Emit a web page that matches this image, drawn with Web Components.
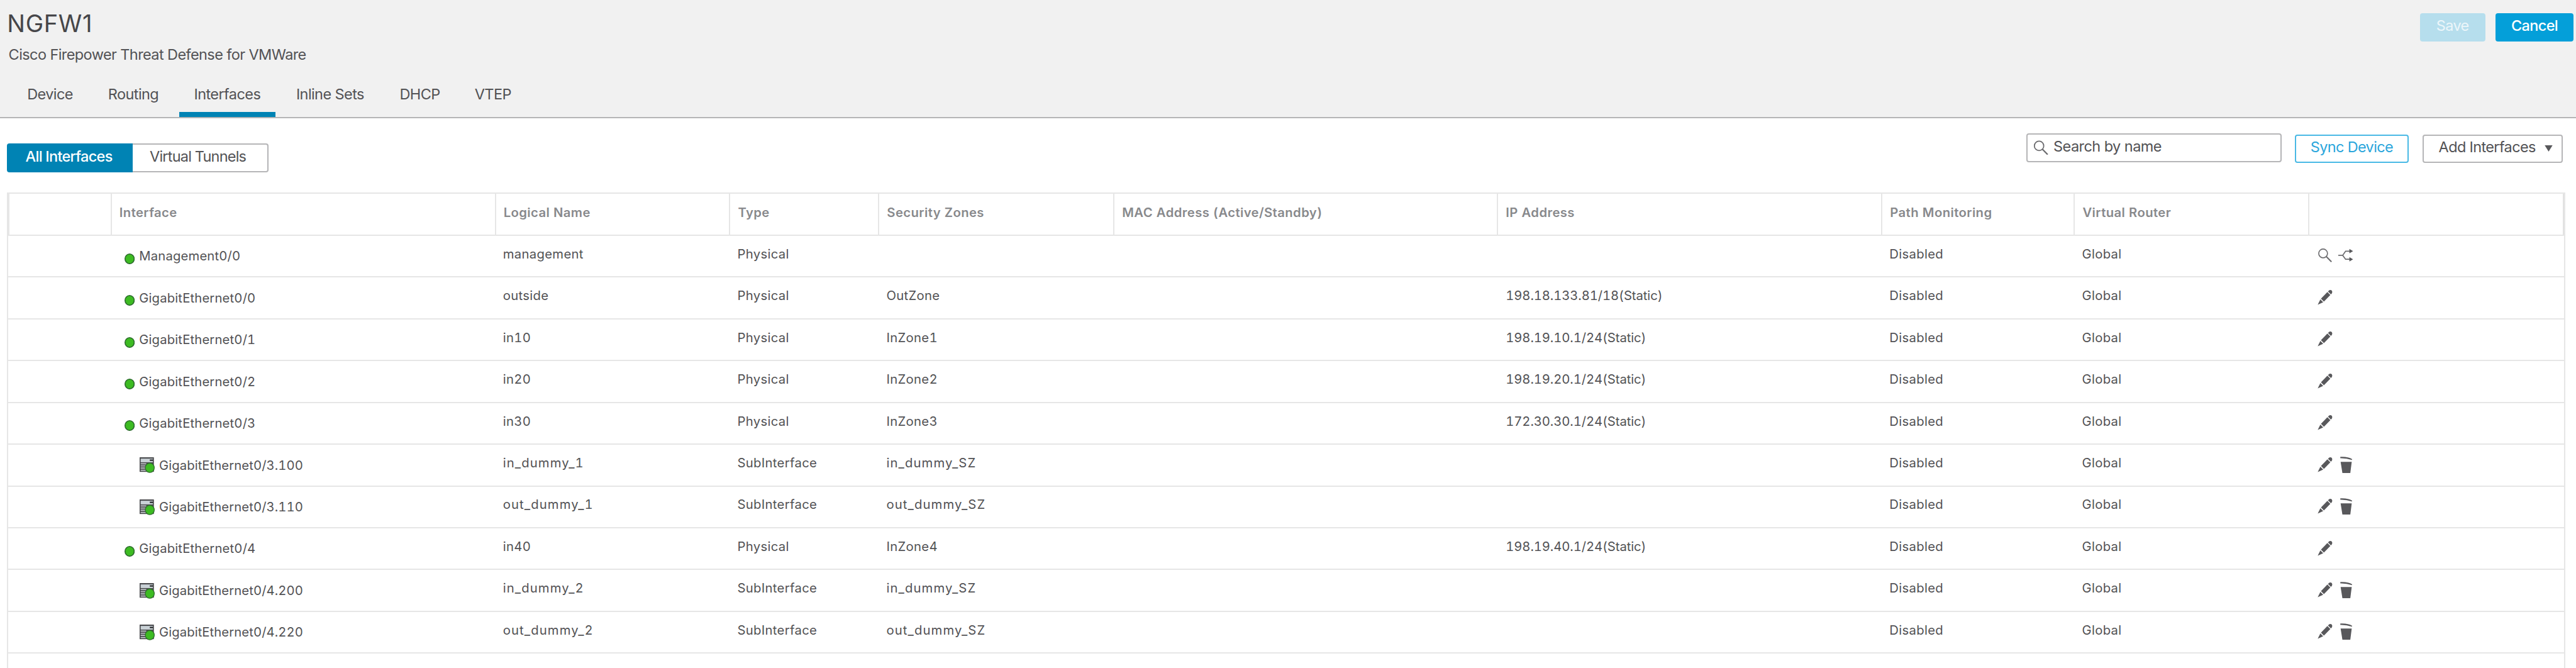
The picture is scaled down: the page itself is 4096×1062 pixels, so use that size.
<!DOCTYPE html>
<html lang="en">
<head>
<meta charset="utf-8">
<title>NGFW1 - Interfaces</title>
<style>
  html { font-size: 8.1045px; }
  body { margin: 0; height: 1062px; overflow: hidden; background: #fff; color: #525255; font-family: Inter, "Liberation Sans", sans-serif; }
</style>
</head>
<body>
<device-page></device-page>
<script>
const define = (name, html, setup) => customElements.define(name, class extends HTMLElement {
  constructor() {
    super();
    const t = document.createElement('template');
    t.innerHTML = '<style>*{box-sizing:border-box}:host{box-sizing:border-box}</style>' + html;
    this.attachShadow({ mode: 'open' }).append(t.content.cloneNode(true));
  }
  connectedCallback() { if (setup) setup(this, this.shadowRoot); }
});

const ICONS = {
  search: '<circle cx="12.2" cy="12.2" r="8.6" fill="none" stroke="#6b6b6e" stroke-width="2"/><path d="M18.3 18.3L28.6 28.6" stroke="#6b6b6e" stroke-width="2.6"/>',
  branch: '<path d="M0 16H8.7L14.4 7.8H23M8.7 16L14.4 23.7H23" fill="none" stroke="#6b6b6e" stroke-width="2.2"/><path d="M21.8 3.5L29 7.8L21.8 12ZM21.8 19.5L29 23.7L21.8 28Z" fill="#58585b"/>',
  edit: '<path d="M20.6 5.4L26.4 11.2L13.8 24L8 18.2ZM6.8 19.6L12.4 25.2L1.6 30.2ZM21.8 4.2L24 2Q27 .2 29.3 2.6Q31 5 29.6 7.8L27.5 10Z" fill="#58585b"/>',
  trash: '<path d="M4 .3Q19-.6 27.3 4.8L26.7 6.6Q16 2.9 4 3.2ZM4.6 10.2H26.4L23.6 32H8.1Z" fill="#58585b"/>',
};

define('ui-icon', `<style>:host{display:block;width:3.2rem;height:3.2rem;flex:none}svg{display:block;width:100%;height:100%;overflow:visible}</style><svg viewBox="0 0 32 32"></svg>`,
  (el, root) => { root.querySelector('svg').innerHTML = ICONS[el.getAttribute('name')]; });

define('status-dot', `<style>:host{display:block;width:2rem;height:2.1rem;flex:none}svg{display:block;width:100%;height:100%}</style>
<svg viewBox="0 0 20 21"><ellipse cx="10" cy="10.5" rx="9" ry="9.5" fill="#3dbb22" stroke="#2b6a2c" stroke-width="2"/></svg>`);

define('sub-icon', `<style>:host{display:block;width:3rem;height:3.1rem;flex:none}svg{display:block;width:100%;height:100%}</style>
<svg viewBox="0 0 30 31">
<rect width="28" height="28.6" fill="#4a4b4e"/>
<rect x="2" y="2.6" width="24" height="7.2" fill="#c9d1d6"/>
<rect x="20" y="4.4" width="6.4" height="2.6" fill="#1f2022"/>
<path d="M2 12.8H13M2 17H13M2 21.2H13M2 25.4H16" stroke="#c3c8cc" stroke-width="2"/>
<ellipse cx="20" cy="20.6" rx="8.8" ry="9.2" fill="#3dbb22" stroke="#2f6e2c" stroke-width="1.6"/></svg>`);

define('ui-button', `<style>
:host{display:flex;align-items:center;justify-content:center;height:5.63rem;padding-bottom:.53rem;border-radius:.5rem;font-size:2.9rem;line-height:4rem;letter-spacing:-.08rem;white-space:nowrap}
:host([kind=primary]){background:#049fd9;color:#fff;font-weight:500}
:host([kind=disabled]){background:#b6deed;color:#ecf6fa;font-weight:400}
:host([kind=link]),:host([kind=plain]){border:2px solid #49b9e5;padding-bottom:.5rem;background:#fff;color:#2ba6dc}
:host([kind=plain]){border-color:#b5b5b7;color:#525255}
</style><slot></slot>`);

define('nav-tab', `<style>
:host{display:block;height:10.28rem;padding-top:3.83rem;text-align:center;font-size:2.9rem;line-height:4rem;letter-spacing:-.072rem;white-space:nowrap}
:host([active]){border-bottom:1rem solid #0083b4}
</style><slot></slot>`);

define('device-header', `<style>
:host{display:flex;justify-content:space-between;height:23.15rem;background:#f1f1f1;border-bottom:2px solid #b5b5b6}
h1{margin:1.66rem 0 0 1.4rem;font-weight:400;font-size:4.7rem;line-height:6rem;letter-spacing:.08rem;color:#464649}
p{margin:1.06rem 0 0 1.68rem;font-size:2.9rem;line-height:4rem;letter-spacing:-.073rem}
nav{display:flex;padding-left:2.25rem}
.actions{display:flex;gap:1.98rem;padding:2.57rem .45rem 0 0}
</style>
<div><h1>NGFW1</h1><p>Cisco Firepower Threat Defense for VMWare</p>
<nav>
<nav-tab style="width:15.13rem">Device</nav-tab>
<nav-tab style="width:17.55rem">Routing</nav-tab>
<nav-tab style="width:18.87rem;margin-left:.22rem" active>Interfaces</nav-tab>
<nav-tab style="width:21.5rem">Inline Sets</nav-tab>
<nav-tab style="width:13.7rem">DHCP</nav-tab>
<nav-tab style="width:15rem">VTEP</nav-tab>
</nav></div>
<div class="actions"><ui-button kind="disabled" style="width:12.81rem">Save</ui-button><ui-button kind="primary" style="width:15.38rem">Cancel</ui-button></div>`);

define('search-box', `<style>
:host{display:flex;align-items:center;width:50.05rem;height:5.63rem;border:2px solid #b5b5b7;border-radius:.5rem;padding:0 0 .5rem 1.1rem;font-size:2.9rem;line-height:4rem;letter-spacing:-.068rem}
svg{width:3rem;height:2.9rem;margin:.4rem .93rem 0 0}
</style><svg viewBox="0 0 30 29"><circle cx="11.4" cy="11" r="9.2" fill="none" stroke="#6b6b6e" stroke-width="2.2"/><path d="M18 17.6L28.3 28" stroke="#6b6b6e" stroke-width="2.8"/></svg><span><slot></slot></span>`);

define('segmented-control', `<style>
:host{display:flex;height:5.63rem;font-size:2.9rem;line-height:4rem;white-space:nowrap}
div{display:flex;align-items:center;padding-bottom:.53rem}
.on{width:24.6rem;padding-left:3.6rem;background:#0083b4;color:#fff;font-weight:500;letter-spacing:-.09rem;border-radius:.5rem 0 0 .5rem}
.off{width:26.7rem;padding-left:3.37rem;border:2px solid #b5b5b7;border-left:0;border-radius:0 .5rem .5rem 0;letter-spacing:-.098rem;padding-bottom:.5rem}
</style><div class="on">All Interfaces</div><div class="off">Virtual Tunnels</div>`);

define('table-toolbar', `<style>
:host{display:flex;justify-content:space-between;height:14.65rem;padding:0 2.55rem 0 1.4rem}
segmented-control{padding:0;margin-top:5rem}
.right{display:flex}
search-box{margin-top:3.03rem}
ui-button{margin-top:3.22rem}
.sync{width:22.4rem;margin-left:2.56rem}
.add{width:27.5rem;margin-left:2.76rem;justify-content:flex-start;padding-left:2.85rem}
svg{width:1.6rem;height:1.25rem;margin:.45rem 0 0 1.75rem}
</style>
<segmented-control></segmented-control>
<div class="right"><search-box>Search by name</search-box>
<ui-button class="sync" kind="link">Sync Device</ui-button>
<ui-button class="add" kind="plain"><span>Add Interfaces</span><svg viewBox="0 0 16 12.5"><path d="M.3 0H15.7L8 12.3Z" fill="#58585b"/></svg></ui-button></div>`);

define('interface-row', `<style>
:host{display:grid;grid-template-columns:20.03rem 75.37rem 45.99rem 29.24rem 46.14rem 75.26rem 75.4rem 37.78rem 46.02rem 1fr;height:8.2rem;border-top:2px solid #e6e6e6;font-size:2.5rem;line-height:4rem;letter-spacing:.04rem;font-variant-numeric:tabular-nums;white-space:nowrap}
.c{padding:1.6rem 0 0 1.63rem}
.c.wide{letter-spacing:.14rem}
.c.ip{padding-left:1.75rem;letter-spacing:-.01rem}
.name{display:flex;padding:2.04rem 0 0 2.7rem;gap:.93rem;letter-spacing:.02rem}
.name.sub{padding-left:5.68rem;gap:.87rem;letter-spacing:.01rem}
status-dot{margin-top:1.4rem}
sub-icon{margin-top:.45rem}
.act{display:flex;gap:1rem;padding:2.3rem 0 0 1.75rem}
:host([head]) .c{padding:1.63rem 0 0 1.5rem;border-left:2px solid #e6e6e6;font-weight:600;color:#88898c;letter-spacing:.05rem}
:host([head]) .c:first-child{border-left:0}
:host([head]) .c:last-child{border-right:2px solid #e2e2e2}
</style>`, (el, root) => {
  const d = el.data || {};
  const add = (cls, html) => {
    const c = document.createElement('div');
    c.className = cls; c.innerHTML = html; root.append(c);
  };
  if (el.hasAttribute('head')) {
    ['', 'Interface', 'Logical Name', 'Type', 'Security Zones', 'MAC Address (Active/Standby)', 'IP Address', 'Path Monitoring', 'Virtual Router', ''].forEach(h => add('c', h));
    return;
  }
  if (!d.name) return;
  add('c', '');
  add('name' + (d.sub ? ' sub' : ''), (d.sub ? '<sub-icon></sub-icon>' : '<status-dot></status-dot>') + `<span>${d.name}</span>`);
  const wide = d.sub ? 'c wide' : 'c';
  add(wide, d.logical);
  add('c', d.type);
  add(wide, d.zone);
  add('c', '');
  add('c ip', d.ip);
  add('c', 'Disabled');
  add('c', 'Global');
  add('act', d.icons.map(i => `<ui-icon name="${i}"></ui-icon>`).join(''));
});

const phys = (name, logical, zone, ip, icons = ['edit']) => ({ name, logical, type: 'Physical', zone, ip, icons });
const sub = (name, logical, zone) => ({ name, logical, type: 'SubInterface', zone, ip: '', icons: ['edit', 'trash'], sub: true });
const ROWS = [
  phys('Management0/0', 'management', '', '', ['search', 'branch']),
  phys('GigabitEthernet0/0', 'outside', 'OutZone', '198.18.133.81/18(Static)'),
  phys('GigabitEthernet0/1', 'in10', 'InZone1', '198.19.10.1/24(Static)'),
  phys('GigabitEthernet0/2', 'in20', 'InZone2', '198.19.20.1/24(Static)'),
  phys('GigabitEthernet0/3', 'in30', 'InZone3', '172.30.30.1/24(Static)'),
  sub('GigabitEthernet0/3.100', 'in_dummy_1', 'in_dummy_SZ'),
  sub('GigabitEthernet0/3.110', 'out_dummy_1', 'out_dummy_SZ'),
  phys('GigabitEthernet0/4', 'in40', 'InZone4', '198.19.40.1/24(Static)'),
  sub('GigabitEthernet0/4.200', 'in_dummy_2', 'in_dummy_SZ'),
  sub('GigabitEthernet0/4.220', 'out_dummy_2', 'out_dummy_SZ'),
];

define('interface-table', `<style>
:host{display:block;flex:1;margin:0 2.05rem 0 1.4rem;border:solid #e6e6e6;border-width:0 2px}
</style><interface-row head></interface-row>`, (el, root) => {
  [...ROWS, {}].forEach(data => {
    const r = document.createElement('interface-row');
    r.data = data; root.append(r);
  });
});

define('device-page', `<style>:host{display:flex;flex-direction:column;height:1062px;overflow:hidden}device-header,table-toolbar{flex:none}</style>
<device-header></device-header><table-toolbar></table-toolbar><interface-table></interface-table>`);
</script>
</body>
</html>
